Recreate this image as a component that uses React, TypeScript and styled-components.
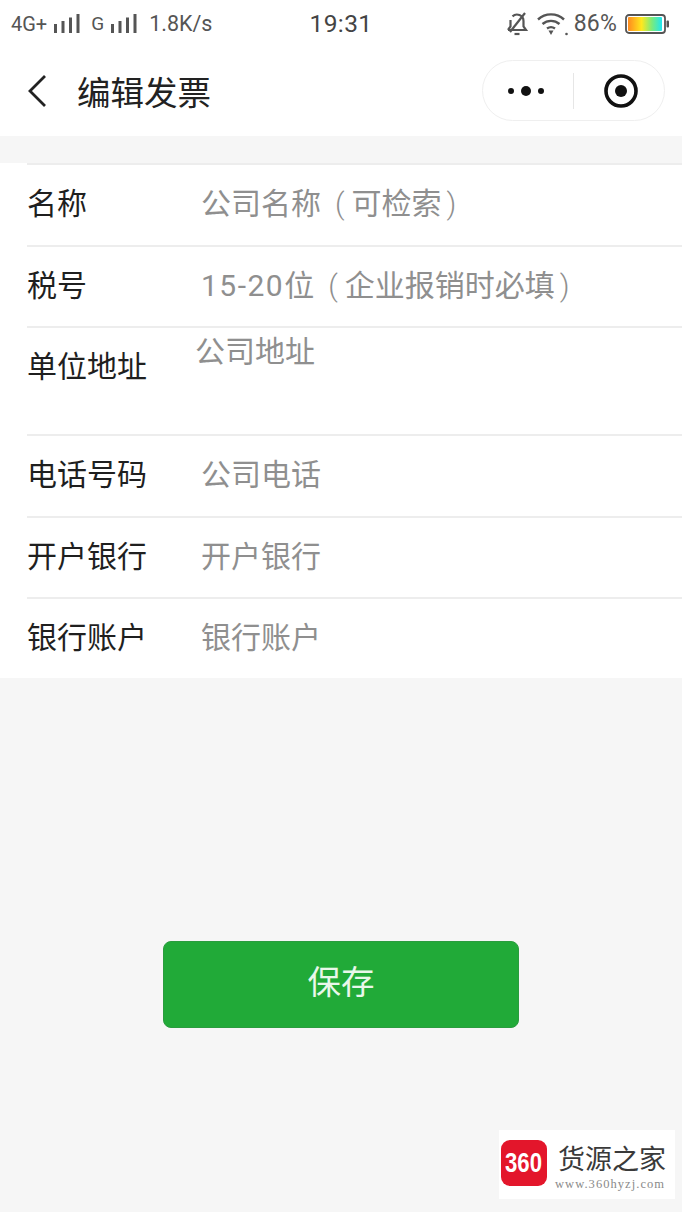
import React from "react";
import styled, { createGlobalStyle } from "styled-components";

const CJK = `"Noto Sans CJK SC", "Noto Sans", sans-serif`;
const LATIN = `Roboto, "Noto Sans CJK SC", sans-serif`;

const Global = createGlobalStyle`
  html, body { margin: 0; padding: 0; background: #f6f6f6; }
  * { box-sizing: border-box; }
`;

const Page = styled.div`
  position: relative;
  width: 682px;
  height: 1212px;
  background: #f6f6f6;
  overflow: hidden;
  font-family: ${CJK};
`;

const Header = styled.header`
  height: 136px;
  background: #fff;
`;

const StatusBar = styled.div`
  height: 50px;
  padding: 0 12px 3px 11px;
  display: grid;
  grid-template-columns: 1fr auto 1fr;
  align-items: center;
  color: #555;
  font-family: ${LATIN};
`;

const StatusLeft = styled.div`
  display: flex;
  align-items: center;
`;

const StatusRight = styled.div`
  display: flex;
  align-items: center;
  justify-content: flex-end;
`;

const NetLabel = styled.span<{ $size: number; $ml: number }>`
  font-size: ${(p) => p.$size}px;
  margin-left: ${(p) => p.$ml}px;
  line-height: 24px;
`;

const Clock = styled.span`
  font-size: 24.5px;
  color: #444;
  letter-spacing: 0.4px;
  margin-left: 1px;
`;

const Percent = styled.span`
  font-size: 23px;
  margin: 0 8px 0 5px;
  letter-spacing: 0.2px;
`;

const SignalSvg = styled.svg`
  margin-left: 7px;
  flex: none;
`;

const Signal = () => (
  <SignalSvg width="27" height="19" viewBox="0 0 27 19">
    <rect x="0" y="10" width="3" height="9" fill="#555" />
    <rect x="7.5" y="7" width="3" height="12" fill="#555" />
    <rect x="15" y="3.5" width="3" height="15.5" fill="#555" />
    <rect x="22.5" y="0" width="3" height="19" fill="#555" />
  </SignalSvg>
);

const WifiSvg = styled.svg`
  margin-left: 8px;
  flex: none;
`;

const Nav = styled.nav`
  height: 86px;
  display: flex;
  align-items: center;
  padding: 0 17px 5px 28px;
`;

const Title = styled.h1`
  margin: 0 0 0 31px;
  font-size: 33.5px;
  line-height: 44px;
  font-weight: 400;
  color: #222;
  flex: 1;
`;

const Capsule = styled.div`
  width: 183px;
  height: 61px;
  border: 1.5px solid #efefef;
  border-radius: 31px;
  display: grid;
  grid-template-columns: 1fr 2px 1fr;
  align-items: center;
  justify-items: center;
`;

const DotsSvg = styled.svg`
  margin-right: 3px;
`;

const TargetSvg = styled.svg`
  margin-left: 3px;
`;

const CapsuleDivider = styled.span`
  width: 1.5px;
  height: 36px;
  background: #e6e6e6;
`;

const Form = styled.section`
  margin-top: 27px;
  background: #fff;
  padding-left: 27px;
`;

const Row = styled.div<{ $h: number }>`
  height: ${(p) => p.$h}px;
  border-top: 2px solid #ededed;
  display: flex;
  align-items: flex-start;
  padding-top: 14px;
`;

const Label = styled.label`
  width: 174px;
  flex: none;
  font-size: 30px;
  line-height: 44px;
  color: #1f1f1f;
`;

const Placeholder = styled.span<{ $shift?: boolean }>`
  font-size: 30px;
  line-height: 44px;
  color: #8f8f8f;
  white-space: nowrap;
  margin-top: ${(p) => (p.$shift ? -15 : 0)}px;
  margin-left: ${(p) => (p.$shift ? -6 : 0)}px;
`;

const PlaceholderNum = styled.span`
  font-family: ${LATIN};
  letter-spacing: 1.5px;
`;

const OpenParen = styled.span`
  font-family: ${LATIN};
  font-weight: 300;
  margin-left: 14px;
  margin-right: 7px;
`;

const CloseParen = styled.span`
  font-family: ${LATIN};
  font-weight: 300;
  margin-left: 5px;
`;

const Actions = styled.div`
  margin-top: 263px;
  display: flex;
  justify-content: center;
`;

const SaveButton = styled.button`
  width: 356px;
  height: 87px;
  border: 1px solid #2a9c3e;
  border-radius: 8px;
  background: #21aa38;
  color: #e9f7ea;
  font-family: ${CJK};
  font-size: 33.5px;
  padding: 0 0 10px;
`;

const Watermark = styled.div`
  position: absolute;
  left: 499px;
  top: 1130px;
  width: 176px;
  height: 69px;
  background: #fff;
  display: flex;
  align-items: center;
  padding: 0 2px 4px;
  gap: 11px;
`;

const LogoBadge = styled.div`
  width: 46px;
  height: 46px;
  border-radius: 9px;
  background: #e3162b;
  display: flex;
  align-items: center;
  justify-content: center;
  flex: none;
`;

const LogoDigits = styled.span`
  display: inline-block;
  color: #fff;
  font-family: "Liberation Sans", sans-serif;
  font-weight: 700;
  font-size: 27px;
  line-height: 30px;
  transform: scaleX(0.82);
`;

const Brand = styled.div`
  display: flex;
  flex-direction: column;
  margin-top: 4px;
`;

const BrandName = styled.div`
  font-family: "Noto Sans CJK SC", sans-serif;
  font-size: 27px;
  line-height: 38px;
  color: #3a3a3a;
  white-space: nowrap;
`;

const BrandUrl = styled.div`
  font-family: "Liberation Serif", serif;
  font-size: 12.5px;
  line-height: 14px;
  letter-spacing: 1.05px;
  color: #8a8a8a;
  white-space: nowrap;
  margin-left: -3px;
`;

type RowData = {
  label: string;
  h: number;
  text: string;
  num?: string;
  tail?: string;
  shift?: boolean;
};

const rows: RowData[] = [
  { label: "名称", text: "公司名称", tail: "可检索", h: 82 },
  { label: "税号", num: "15-20", text: "位", tail: "企业报销时必填", h: 81 },
  { label: "单位地址", text: "公司地址", h: 108, shift: true },
  { label: "电话号码", text: "公司电话", h: 82 },
  { label: "开户银行", text: "开户银行", h: 81 },
  { label: "银行账户", text: "银行账户", h: 81 },
];

export default function App() {
  return (
    <Page>
      <Global />
      <Header>
        <StatusBar>
          <StatusLeft>
            <NetLabel $size={20} $ml={0}>4G+</NetLabel>
            <Signal />
            <NetLabel $size={19} $ml={10}>G</NetLabel>
            <Signal />
            <NetLabel $size={21.5} $ml={11}>1.8K/s</NetLabel>
          </StatusLeft>
          <Clock>19:31</Clock>
          <StatusRight>
            <svg width="24" height="26" viewBox="0 0 24 26" fill="none" stroke="#555" strokeWidth="2.2">
              <path d="M3 19h18l-2.5-3.5V10a6.5 6.5 0 0 0-11-4.6" />
              <path d="M5.5 9v6.5L3 19" />
              <path d="M20 2 5 21" />
              <path d="M9.5 23h5" />
            </svg>
            <WifiSvg width="32" height="24" viewBox="0 0 32 24" fill="none" stroke="#555" strokeWidth="2.4">
              <path d="M1 7.5a19 19 0 0 1 26 0" />
              <path d="M5.5 12a13 13 0 0 1 17 0" />
              <path d="M10 16.5a7 7 0 0 1 8 0" />
              <path d="M11.5 18.5 14 23l2.5-4.500z" fill="#555" stroke="none" />
              <circle cx="29.500" cy="22" r="1.300" fill="#555" stroke="none" />
            </WifiSvg>
            <Percent>86%</Percent>
            <svg width="45" height="20" viewBox="0 0 45 20">
              <defs>
                <linearGradient id="bat" x1="0" x2="1" y1="0" y2="0">
                  <stop offset="0" stopColor="#ff8a1e" />
                  <stop offset="0.4" stopColor="#ffe81e" />
                  <stop offset="0.7" stopColor="#7ceb7a" />
                  <stop offset="1" stopColor="#1ee6f0" />
                </linearGradient>
              </defs>
              <rect x="1" y="1" width="39" height="18" rx="3" fill="#fff" stroke="#555" strokeWidth="1.800" />
              <rect x="3" y="3" width="34" height="14" rx="1" fill="url(#bat)" />
              <rect x="41.500" y="6.500" width="2.500" height="7" rx="1" fill="#555" />
            </svg>
          </StatusRight>
        </StatusBar>
        <Nav>
          <svg width="18" height="34" viewBox="0 0 18 34" fill="none" stroke="#222" strokeWidth="2.800">
            <path d="M17 2 2 17l15 15" />
          </svg>
          <Title>编辑发票</Title>
          <Capsule>
            <DotsSvg width="38" height="14" viewBox="0 0 38 14" fill="#111">
              <circle cx="4" cy="7" r="3" />
              <circle cx="19" cy="7" r="5" />
              <circle cx="34" cy="7" r="3" />
            </DotsSvg>
            <CapsuleDivider />
            <TargetSvg width="36" height="36" viewBox="0 0 36 36">
              <circle cx="18" cy="18" r="15" fill="none" stroke="#111" strokeWidth="3.600" />
              <circle cx="18" cy="18" r="6" fill="#111" />
            </TargetSvg>
          </Capsule>
        </Nav>
      </Header>
      <Form>
        {rows.map((r) => (
          <Row key={r.label} $h={r.h}>
            <Label>{r.label}</Label>
            <Placeholder $shift={r.shift}>
              {r.num && <PlaceholderNum>{r.num}</PlaceholderNum>}
              {r.text}
              {r.tail && (
                <>
                  <OpenParen>(</OpenParen>
                  {r.tail}
                  <CloseParen>)</CloseParen>
                </>
              )}
            </Placeholder>
          </Row>
        ))}
      </Form>
      <Actions>
        <SaveButton>保存</SaveButton>
      </Actions>
      <Watermark>
        <LogoBadge>
          <LogoDigits>360</LogoDigits>
        </LogoBadge>
        <Brand>
          <BrandName>货源之家</BrandName>
          <BrandUrl>www.360hyzj.com</BrandUrl>
        </Brand>
      </Watermark>
    </Page>
  );
}
